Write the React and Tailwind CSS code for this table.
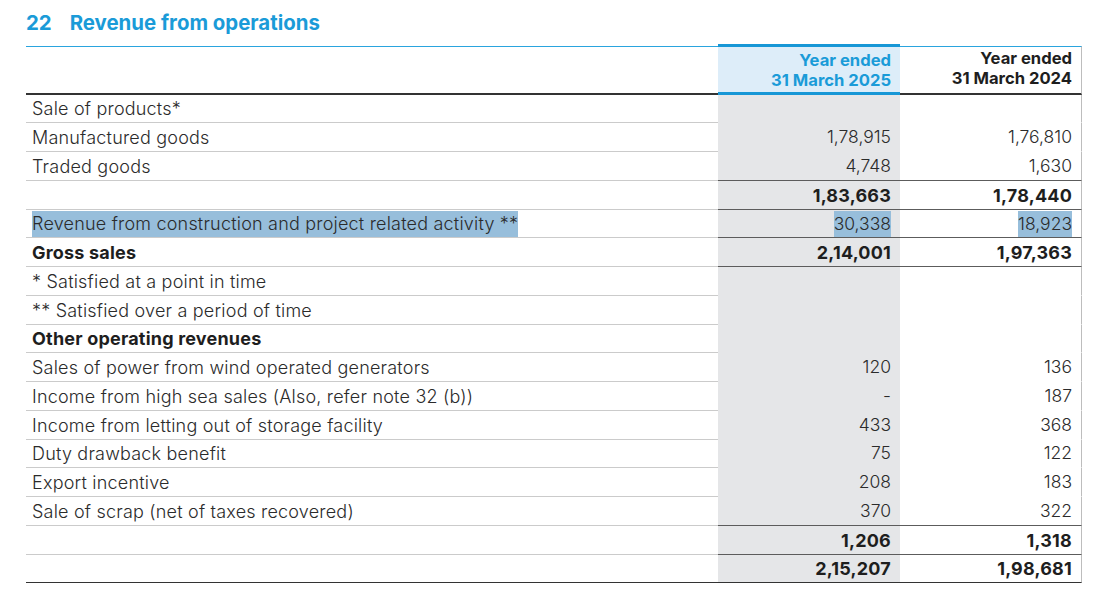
import React from "react";

// note 22 rows: label, current year, previous year
const rows = [
  { label: "Sale of products*", h: "h-[28px]" },
  { label: "Manufactured goods", a: "1,78,915", b: "1,76,810", h: "h-[29px]" },
  { label: "Traded goods", a: "4,748", b: "1,630", h: "h-[29px]", line: true },
  { label: "", a: "1,83,663", b: "1,78,440", bold: true, h: "h-[29px]", line: true },
  {
    label: "Revenue from construction and project related activity **",
    a: "30,338",
    b: "18,923",
    h: "h-[28px]",
    line: true,
    selected: true,
  },
  { label: "Gross sales", a: "2,14,001", b: "1,97,363", bold: true, h: "h-[29px]", line: true },
  { label: "* Satisfied at a point in time", h: "h-[29px]" },
  { label: "** Satisfied over a period of time", h: "h-[29px]" },
  { label: "Other operating revenues", bold: true, h: "h-[28px]" },
  { label: "Sales of power from wind operated generators", a: "120", b: "136", h: "h-[29px]" },
  { label: "Income from high sea sales (Also, refer note 32 (b))", a: "-", b: "187", h: "h-[29px]" },
  { label: "Income from letting out of storage facility", a: "433", b: "368", h: "h-[29px]" },
  { label: "Duty drawback benefit", a: "75", b: "122", h: "h-[28px]" },
  { label: "Export incentive", a: "208", b: "183", h: "h-[29px]" },
  { label: "Sale of scrap (net of taxes recovered)", a: "370", b: "322", h: "h-[29px]", line: true },
  { label: "", a: "1,206", b: "1,318", bold: true, h: "h-[29px]", line: true },
  { label: "", a: "2,15,207", b: "1,98,681", bold: true, h: "h-[28px]", line: true, last: true },
];

const Cell = ({ text, selected }) =>
  selected ? (
    <span className="inline-block bg-[#97bedb] h-[26px] leading-[26px]">{text}</span>
  ) : (
    text
  );

const App = () => {
  return (
    <div className="w-[1096px] h-[594px] bg-white font-['Inter','Liberation_Sans',sans-serif] text-[#2b2b2b] pl-[26px]">
      <h2 className="pt-[10px] h-[44px] flex gap-[18px] text-[20.4px] font-bold text-[#1a9bd8] leading-[26px]">
        <span>22</span>
        <span>Revenue from operations</span>
      </h2>

      <div className="grid grid-cols-[692px_182px_182px] items-start">
        {/* header */}
        <div className="mt-[2px] h-[49px] border-t border-[#2aa4de] border-b-2 border-b-[#333]" />
        <div className="h-[51px] border-t-[3px] border-b-[3px] border-[#1797d6] bg-[#ddedf9] text-right pr-[9px] pt-[3px] text-[16.6px] leading-[20px] font-bold text-[#1a9bd8]">
          <div>Year ended</div>
          <div>31 March 2025</div>
        </div>
        <div className="mt-[2px] h-[49px] border-t border-[#2aa4de] border-b-2 border-b-[#333] border-r border-r-[#bdbdbd] text-right pr-[9px] pt-[1px] text-[16.6px] leading-[20px] font-bold text-[#1e1e1e]">
          <div>Year ended</div>
          <div>31 March 2024</div>
        </div>

        {rows.map((r, i) => {
          const labelBorder = r.last ? "border-[#333]" : "border-[#cbcbcb]";
          const valBorder = r.line ? (r.last ? "border-[#333]" : "border-[#5c5c5c]") : "border-transparent";
          const weight = r.bold ? "font-bold text-[#1e1e1e]" : "font-light";
          const labelSize = "text-[18px] tracking-[0.2px]";
          const numSize = r.bold ? "text-[18px] tracking-[0.2px]" : "text-[17.5px]";
          return (
            <React.Fragment key={i}>
              <div
                className={`${r.h} ${labelBorder} ${weight} ${labelSize} border-b flex items-center pl-[6px] whitespace-nowrap`}
              >
                <Cell text={r.label} selected={r.selected} />
              </div>
              <div
                className={`${r.h} ${valBorder} ${weight} ${numSize} border-b bg-[#e5e6e8] flex items-center justify-end pr-[9px]`}
              >
                {r.a && <Cell text={r.a} selected={r.selected} />}
              </div>
              <div
                className={`${r.h} ${valBorder} ${weight} ${numSize} border-b border-r border-r-[#bdbdbd] flex items-center justify-end pr-[9px]`}
              >
                {r.b && <Cell text={r.b} selected={r.selected} />}
              </div>
            </React.Fragment>
          );
        })}
      </div>
    </div>
  );
};

export default App;
